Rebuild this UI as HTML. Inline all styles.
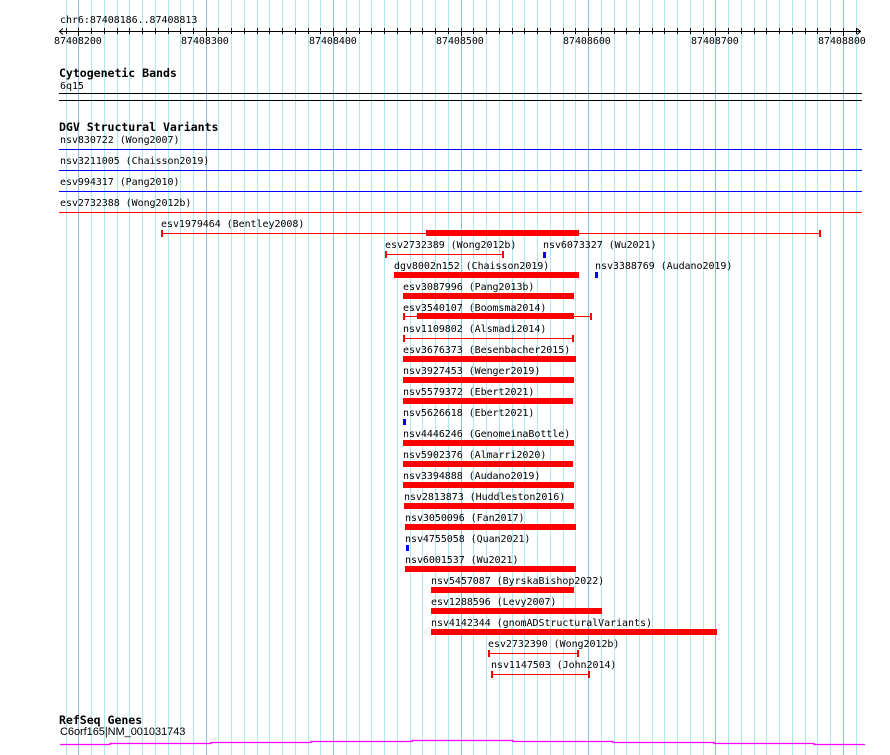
<!DOCTYPE html>
<html><head><meta charset="utf-8"><style>
body{margin:0;width:890px;height:755px;background:#fff;position:relative;overflow:hidden;font-family:"DejaVu Sans Mono","Liberation Mono",monospace;font-size:10px;color:#000}
.t{position:absolute;white-space:nowrap;line-height:11px;font-size:10px;letter-spacing:-0.05px}
.b{font-weight:bold;font-size:11.6px;line-height:12px}
.h{position:absolute;height:1px}
.bar{position:absolute;height:6px;background:#f00}
.ln{position:absolute;height:1px;background:#f00}
.tk{position:absolute;width:2px;height:7px;background:#f00}
.bl{position:absolute;width:3px;height:6px;background:#00f}
svg{position:absolute;left:0;top:0}
</style></head><body>
<svg id="g" width="890" height="755"></svg>
<div class="t" style="left:60px;top:15px">chr6:87408186..87408813</div>
<div class="t" style="left:54px;top:36px">87408200</div>
<div class="t" style="left:181px;top:36px">87408300</div>
<div class="t" style="left:309px;top:36px">87408400</div>
<div class="t" style="left:436px;top:36px">87408500</div>
<div class="t" style="left:563px;top:36px">87408600</div>
<div class="t" style="left:691px;top:36px">87408700</div>
<div class="t" style="left:818px;top:36px">87408800</div>

<div class="t b" style="left:59px;top:67px">Cytogenetic Bands</div>
<div class="t" style="left:60px;top:81px">6q15</div>
<div class="h" style="left:59px;top:93px;width:803px;background:#000"></div>
<div class="h" style="left:59px;top:100px;width:803px;background:#000"></div>

<div class="t b" style="left:59px;top:121px">DGV Structural Variants</div>
<div class="t" style="left:60px;top:135px">nsv830722 (Wong2007)</div>
<div class="h" style="left:59px;top:149px;width:803px;background:#00f"></div>
<div class="t" style="left:60px;top:156px">nsv3211005 (Chaisson2019)</div>
<div class="h" style="left:59px;top:170px;width:803px;background:#00f"></div>
<div class="t" style="left:60px;top:177px">esv994317 (Pang2010)</div>
<div class="h" style="left:59px;top:191px;width:803px;background:#00f"></div>
<div class="t" style="left:60px;top:198px">esv2732388 (Wong2012b)</div>
<div class="h" style="left:59px;top:212px;width:803px;background:#f00"></div>

<div class="t" style="left:161px;top:219px">esv1979464 (Bentley2008)</div>
<div class="ln" style="left:161px;top:233px;width:660px"></div><div class="tk" style="left:161px;top:230px"></div><div class="tk" style="left:819px;top:230px"></div>
<div class="bar" style="left:426px;top:230px;width:153px"></div>

<div class="t" style="left:385px;top:240px">esv2732389 (Wong2012b)</div>
<div class="ln" style="left:385px;top:254px;width:118px"></div><div class="tk" style="left:385px;top:251px"></div><div class="tk" style="left:502px;top:251px"></div>
<div class="t" style="left:543px;top:240px">nsv6073327 (Wu2021)</div>
<div class="bl" style="left:543px;top:252px"></div>

<div class="t" style="left:394px;top:261px">dgv8002n152 (Chaisson2019)</div>
<div class="bar" style="left:394px;top:272px;width:185px"></div>
<div class="t" style="left:595px;top:261px">nsv3388769 (Audano2019)</div>
<div class="bl" style="left:595px;top:272px"></div>

<div class="t" style="left:403px;top:282px">esv3087996 (Pang2013b)</div>
<div class="bar" style="left:403px;top:293px;width:171px"></div>

<div class="t" style="left:403px;top:303px">esv3540107 (Boomsma2014)</div>
<div class="ln" style="left:403px;top:316px;width:188px"></div><div class="tk" style="left:403px;top:313px"></div><div class="tk" style="left:590px;top:313px"></div>
<div class="bar" style="left:417px;top:313px;width:157px"></div>

<div class="t" style="left:403px;top:324px">nsv1109802 (Alsmadi2014)</div>
<div class="ln" style="left:403px;top:338px;width:170px"></div><div class="tk" style="left:403px;top:335px"></div><div class="tk" style="left:572px;top:335px"></div>

<div class="t" style="left:403px;top:345px">esv3676373 (Besenbacher2015)</div>
<div class="bar" style="left:403px;top:356px;width:173px"></div>
<div class="t" style="left:403px;top:366px">nsv3927453 (Wenger2019)</div>
<div class="bar" style="left:403px;top:377px;width:171px"></div>
<div class="t" style="left:403px;top:387px">nsv5579372 (Ebert2021)</div>
<div class="bar" style="left:403px;top:398px;width:170px"></div>
<div class="t" style="left:403px;top:408px">nsv5626618 (Ebert2021)</div>
<div class="bl" style="left:403px;top:419px"></div>
<div class="t" style="left:403px;top:429px">nsv4446246 (GenomeinaBottle)</div>
<div class="bar" style="left:403px;top:440px;width:171px"></div>
<div class="t" style="left:403px;top:450px">nsv5902376 (Almarri2020)</div>
<div class="bar" style="left:403px;top:461px;width:170px"></div>
<div class="t" style="left:403px;top:471px">nsv3394888 (Audano2019)</div>
<div class="bar" style="left:403px;top:482px;width:171px"></div>
<div class="t" style="left:404px;top:492px">nsv2813873 (Huddleston2016)</div>
<div class="bar" style="left:404px;top:503px;width:170px"></div>
<div class="t" style="left:405px;top:513px">nsv3050096 (Fan2017)</div>
<div class="bar" style="left:405px;top:524px;width:171px"></div>
<div class="t" style="left:405px;top:534px">nsv4755058 (Quan2021)</div>
<div class="bl" style="left:406px;top:545px"></div>
<div class="t" style="left:405px;top:555px">nsv6001537 (Wu2021)</div>
<div class="bar" style="left:405px;top:566px;width:171px"></div>
<div class="t" style="left:431px;top:576px">nsv5457087 (ByrskaBishop2022)</div>
<div class="bar" style="left:431px;top:587px;width:143px"></div>
<div class="t" style="left:431px;top:597px">esv1288596 (Levy2007)</div>
<div class="bar" style="left:431px;top:608px;width:171px"></div>
<div class="t" style="left:431px;top:618px">nsv4142344 (gnomADStructuralVariants)</div>
<div class="bar" style="left:431px;top:629px;width:286px"></div>
<div class="t" style="left:488px;top:639px">esv2732390 (Wong2012b)</div>
<div class="ln" style="left:488px;top:653px;width:91px"></div><div class="tk" style="left:488px;top:650px"></div><div class="tk" style="left:577px;top:650px"></div>
<div class="t" style="left:491px;top:660px">nsv1147503 (John2014)</div>
<div class="ln" style="left:491px;top:674px;width:98px"></div><div class="tk" style="left:491px;top:671px"></div><div class="tk" style="left:588px;top:671px"></div>

<div class="t b" style="left:59px;top:714px">RefSeq Genes</div>
<div class="t" style="left:60px;top:727px;font-family:'Liberation Sans Narrow','Liberation Sans',sans-serif;font-size:11px">C6orf165|NM_001031743</div>
<svg width="890" height="755" style="position:absolute;left:0;top:0">
<polyline fill="none" stroke="#f0f" stroke-width="1.2" points="60,744.5 110,744.5 110,743.5 211,743.5 211,742.5 311,742.5 311,741.5 412,741.5 412,740.5 513,740.5 513,741.5 613,741.5 613,742.5 714,742.5 714,743.5 814,743.5 814,744.5 865,744.5"/>
</svg>
<script>
var s=document.getElementById('g'),h='';
var p=1.2743,x0=78.3;
for(var i=-1;i<=61;i++){var x=x0+i*p*10;if(x<60||x>857)continue;var maj=(i%10===0);
h+='<line x1="'+(Math.round(x)+.5)+'" y1="0" x2="'+(Math.round(x)+.5)+'" y2="755" stroke="'+(maj?'#88c0e6':'#aee8f0')+'"/>';
h+='<line x1="'+(Math.round(x)+.5)+'" y1="28" x2="'+(Math.round(x)+.5)+'" y2="'+(maj?36:34)+'" stroke="#000"/>';}
h+='<line x1="59" y1="31.5" x2="861" y2="31.5" stroke="#000"/>';
h+='<polyline points="63,28.5 59.5,31.5 63,34.5" fill="none" stroke="#000"/><polyline points="857,28.5 860.5,31.5 857,34.5" fill="none" stroke="#000"/>';
s.innerHTML=h;
</script>
</body></html>
